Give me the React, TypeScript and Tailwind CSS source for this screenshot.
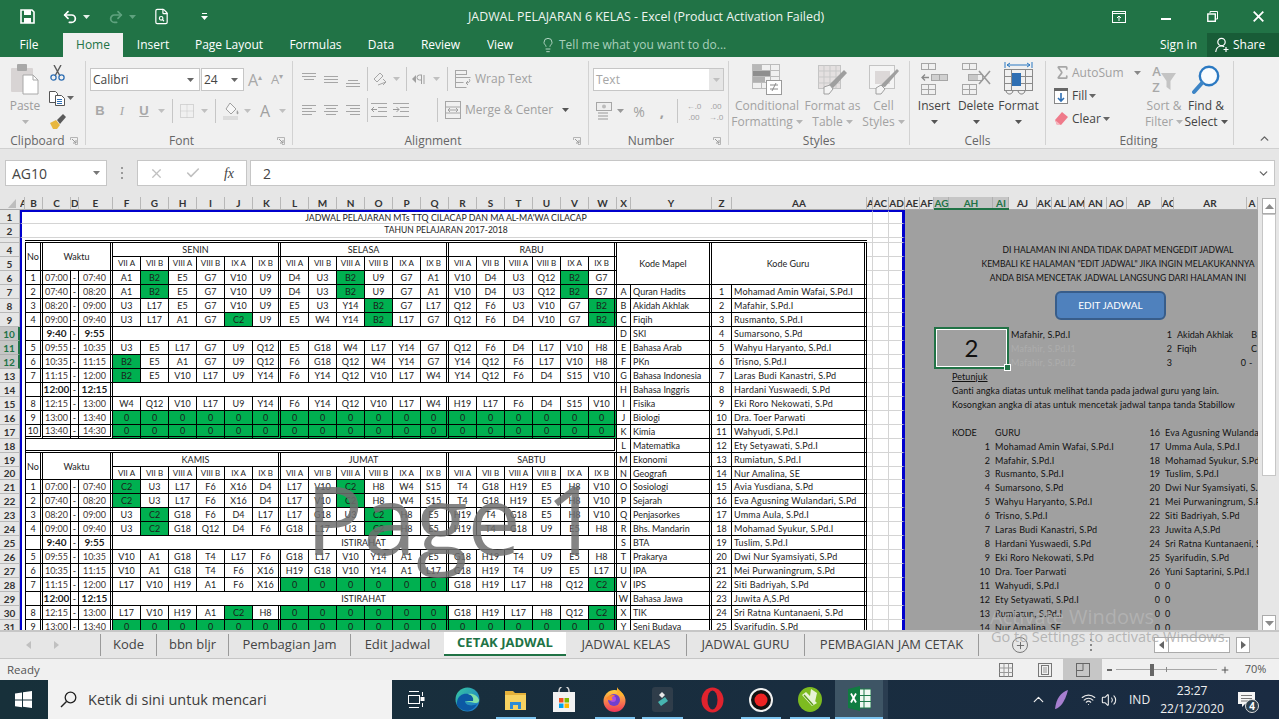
import React from "react";
import { Undo2, Redo2, FileSearch, Lightbulb, Sigma, ChevronUp, ChevronDown, X, Check, Plus, Volume2, Wifi } from "lucide-react";

/* ---------- sheet data ---------- */
const COLS: [string, number][] = [
  ["", 20], ["A", 5], ["B", 18], ["C", 28], ["D", 8], ["E", 34],
  ["F", 28], ["G", 28], ["H", 28], ["I", 28], ["J", 28], ["K", 28], ["L", 28], ["M", 28], ["N", 28], ["O", 28], ["P", 28], ["Q", 28],
  ["R", 28], ["S", 28], ["T", 28], ["U", 28], ["V", 28], ["W", 28],
  ["X", 14], ["Y", 81], ["Z", 20], ["AA", 135], ["A", 6], ["AC", 16], ["AD", 16], ["AE", 15], ["AF", 14], ["AG", 15], ["AH", 44], ["AI", 16],
  ["AJ", 28], ["AK", 15], ["AL", 17], ["AM", 16], ["AN", 22], ["AO", 20], ["AP", 35], ["AC", 12], ["AR", 73], ["A", 11],
];

const HEIGHTS: Record<number, number> = { 3: 5, 20: 13 };
const h = (r: number) => HEIGHTS[r] ?? 14;

const Z6 = ["0*", "0*", "0*", "0*", "0*", "0*"];
const SCHED: Record<number, string[]> = {
  6: ["A1", "B2*", "E5", "G7", "V10", "U9", "D4", "U3", "B2*", "U9", "G7", "A1", "V10", "D4", "U3", "Q12", "B2*", "G7"],
  7: ["A1", "B2*", "E5", "G7", "V10", "U9", "D4", "U3", "B2*", "U9", "G7", "A1", "V10", "D4", "U3", "Q12", "B2*", "G7"],
  8: ["U3", "L17", "E5", "G7", "V10", "U9", "E5", "U3", "Y14", "B2*", "G7", "L17", "Q12", "F6", "U3", "V10", "G7", "B2*"],
  9: ["U3", "L17", "A1", "G7", "C2*", "U9", "E5", "W4", "Y14", "B2*", "L17", "G7", "Q12", "F6", "D4", "V10", "G7", "B2*"],
  11: ["U3", "E5", "L17", "G7", "U9", "Q12", "E5", "G18", "W4", "L17", "Y14", "G7", "Q12", "F6", "D4", "L17", "V10", "H8"],
  12: ["B2*", "E5", "A1", "G7", "U9", "Q12", "F6", "G18", "Q12", "W4", "Y14", "G7", "Y14", "Q12", "F6", "L17", "V10", "H8"],
  13: ["B2*", "E5", "V10", "L17", "U9", "Y14", "F6", "Y14", "Q12", "V10", "L17", "W4", "Y14", "Q12", "F6", "D4", "S15", "V10"],
  15: ["W4", "Q12", "V10", "L17", "U9", "Y14", "F6", "Y14", "Q12", "V10", "L17", "W4", "H19", "L17", "F6", "D4", "S15", "V10"],
  16: [...Z6, ...Z6, ...Z6],
  17: [...Z6, ...Z6, ...Z6],
  21: ["C2*", "U3", "L17", "F6", "X16", "D4", "L17", "V10", "C2*", "H8", "W4", "S15", "T4", "G18", "H19", "E5", "H8", "V10"],
  22: ["C2*", "U3", "L17", "F6", "X16", "D4", "L17", "V10", "C2*", "H8", "W4", "S15", "T4", "G18", "H19", "E5", "H8", "V10"],
  23: ["U3", "C2*", "G18", "F6", "D4", "L17", "L17", "G18", "U3", "C2*", "H8", "E5", "H19", "T4", "G18", "E5", "H8", "V10"],
  24: ["U3", "C2*", "G18", "Q12", "D4", "F6", "G18", "L17", "U3", "C2*", "H8", "E5", "H19", "T4", "G18", "U9", "E5", "H8"],
  26: ["V10", "A1", "G18", "T4", "L17", "F6", "G18", "L17", "V10", "Y14", "A1", "E5", "G18", "H19", "T4", "U9", "E5", "H8"],
  27: ["V10", "A1", "G18", "T4", "F6", "X16", "H19", "G18", "V10", "Y14", "A1", "L17", "G18", "H19", "T4", "U9", "E5", "L17"],
  28: ["L17", "V10", "H19", "A1", "F6", "X16", ...Z6, "G18", "H19", "L17", "H8", "Q12", "C2*"],
  30: ["L17", "V10", "H19", "A1", "C2*", "H8", ...Z6, "G18", "H19", "L17", "H8", "Q12", "C2*"],
  31: [...Z6, ...Z6, ...Z6],
};
const TIMES: [string, string, string][] = [
  ["1", "07:00", "07:40"], ["2", "07:40", "08:20"], ["3", "08:20", "09:00"], ["4", "09:00", "09:40"], ["", "9:40", "9:55"],
  ["5", "09:55", "10:35"], ["6", "10:35", "11:15"], ["7", "11:15", "12:00"], ["", "12:00", "12:15"],
  ["8", "12:15", "13:00"], ["9", "13:00", "13:40"], ["10", "13:40", "14:30"],
];
const MAPEL = ["Quran Hadits", "Akidah Akhlak", "Fiqih", "SKI", "Bahasa Arab", "PKn", "Bahasa Indonesia", "Bahasa Inggris", "Fisika", "Biologi", "Kimia", "Matematika", "Ekonomi", "Geografi", "Sosiologi", "Sejarah", "Penjasorkes", "Bhs.  Mandarin", "BTA", "Prakarya", "IPA", "IPS", "Bahasa Jawa", "TIK", "Seni Budaya"];
const GURU = ["Mohamad Amin Wafai, S.Pd.I", "Mafahir, S.Pd.I", "Rusmanto, S.Pd.I", "Sumarsono, S.Pd", "Wahyu Haryanto, S.Pd.I", "Trisno, S.Pd.I", "Laras Budi Kanastri, S.Pd", "Hardani Yuswaedi, S.Pd", "Eki Roro Nekowati, S.Pd", "Dra. Toer Parwati", "Wahyudi, S.Pd.I", "Ety Setyawati, S.Pd.I", "Rumiatun, S.Pd.I", "Nur Amalina, SE", "Avia Yusdiana, S.Pd", "Eva Agusning Wulandari, S.Pd", "Umma Aula, S.Pd.I", "Mohamad Syukur, S.Pd.I", "Tuslim, S.Pd.I", "Dwi Nur Syamsiyati, S.Pd", "Mei Purwaningrum, S.Pd", "Siti Badriyah, S.Pd", "Juwita A,S.Pd", "Sri Ratna Kuntanaeni, S.Pd", "Syarifudin, S.Pd", "Yuni Saptarini, S.Pd.I"];
const KELAS = ["VII A", "VII B", "VIII A", "VIII B", "IX A", "IX B"];

/* ---------- cell classes ---------- */
const TD = "p-0 overflow-hidden whitespace-nowrap text-[#1c1c1c] leading-[11px] align-middle";
const C = "text-center";
const S1 = "border-r border-b border-double border-black";
const S2 = "border-r-[3px] border-b border-double border-black";
const GRAY = "p-0 bg-[#a0a0a0] overflow-hidden whitespace-nowrap text-[#111] leading-[11px] align-middle";

function rowHeader(r: number) {
  const sel = r >= 10 && r <= 12;
  return (
    <th
      key="rh"
      className={
        sel
          ? "p-0 bg-[#c6c6c6] text-[#217346] text-[10px] font-bold border-r-2 border-b border-r-[#217346] border-b-[#b0b0b0] leading-[10px]"
          : "p-0 bg-[#e6e6e6] text-[#333] text-[10px] font-bold border-r border-b border-[#b8b8b8] leading-[10px]"
      }
    >
      {r === 3 ? "" : r}
    </th>
  );
}

function leftA() {
  return <td key="a" className="p-0 bg-white border-l-2 border-l-[#0000cd]" />;
}

function rightGrid(top = false) {
  const c = top
    ? "p-0 bg-white border-t-2 border-t-[#0000cd] border-r border-b border-r-[#d4d4d4] border-b-[#d4d4d4]"
    : "p-0 bg-white border-r border-b border-[#d4d4d4]";
  const d = top
    ? "p-0 bg-white border-t-2 border-t-[#0000cd] border-r-[3px] border-b border-r-[#0000cd] border-b-[#d4d4d4]"
    : "p-0 bg-white border-r-[3px] border-b border-r-[#0000cd] border-b-[#d4d4d4]";
  return [<td key="ab" className={c} />, <td key="ac" className={c} />, <td key="ad" className={d} />];
}

function scheduleCell(v: string, i: number) {
  const green = v.endsWith("*");
  const border = i % 6 === 5 ? S2 : S1;
  return (
    <td key={i} className={`${TD} ${C} ${border} ${green ? "bg-[#00b050]" : "bg-white"}`}>
      {green ? v.slice(0, -1) : v}
    </td>
  );
}

function leftBlock(r: number) {
  const base = r >= 21 ? r - 21 : r - 6;
  const [no, a, b] = TIMES[base];
  const brk = no === "";
  const dbl = r === 17 ? "border-b-[3px]" : "";
  const timeCls = brk ? "text-[#000] text-[10px] font-bold" : "text-[#3f3530]";
  return [
    <td key="b" className={`${TD} ${C} border-l ${S2} ${dbl} bg-white`}>{no}</td>,
    <td key="c" className={`${TD} ${C} ${S1} ${dbl} bg-white ${timeCls}`}>{a}</td>,
    <td key="d" className={`${TD} ${C} ${S1} ${dbl} bg-white`}>-</td>,
    <td key="e" className={`${TD} ${C} ${S2} ${dbl} bg-white ${timeCls}`}>{b}</td>,
  ];
}

function dayHeaderRow(names: string[]) {
  return names.map((n) => (
    <td key={n} colSpan={6} className={`${TD} ${C} ${S2} bg-white`}>{n}</td>
  ));
}

function rightBlocks(r: number) {
  if (r === 4) {
    return [
      <td key="m" colSpan={2} rowSpan={3} className={`${TD} ${C} ${S2} bg-white`}>Kode Mapel</td>,
      <td key="g" colSpan={2} rowSpan={3} className={`${TD} ${C} ${S2} bg-white`}>Kode Guru</td>,
    ];
  }
  if (r < 7) return [];
  const i = r - 7;
  return [
    <td key="x" className={`${TD} ${C} ${S1} bg-white`}>{String.fromCharCode(65 + i)}</td>,
    <td key="y" className={`${TD} ${S2} bg-white pl-[2px]`}>{MAPEL[i]}</td>,
    <td key="z" className={`${TD} ${C} ${S1} bg-white`}>{i + 1}</td>,
    <td key="aa" className={`${TD} ${S2} bg-white pl-[2px] tracking-[0.2px]`}>{GURU[i]}</td>,
  ];
}

function grayEmpty(n: number, k = "g") {
  return <td key={k} colSpan={n} className={GRAY} />;
}

function grayBlock(r: number) {
  if (r >= 4 && r <= 6) {
    const t = [
      "DI HALAMAN INI ANDA TIDAK DAPAT MENGEDIT JADWAL",
      'KEMBALI KE HALAMAN "EDIT JADWAL" JIKA INGIN MELAKUKANNYA',
      "ANDA BISA MENCETAK JADWAL LANGSUNG DARI HALAMAN INI",
    ][r - 4];
    return [grayEmpty(3, "g1"), <td key="t" colSpan={12} className={`${GRAY} text-center pl-[29px] text-[8.5px]`}>{t}</td>];
  }
  if (r >= 10 && r <= 12) {
    const cells = [grayEmpty(2, "g1")];
    if (r === 10) {
      cells.push(
        <td key="sel" colSpan={3} rowSpan={3} className="p-0 relative bg-[#a0a0a0] border-2 border-[#217346] shadow-[inset_0_0_0_1px_#fff] text-center text-[24px] leading-none text-[#111]">
          2
          <span className="absolute -right-[4px] -bottom-[4px] w-[7px] h-[7px] bg-[#217346] border border-white" />
        </td>
      );
    }
    const names = ["Mafahir, S.Pd.I", "Mafahir, S.Pd.I1", "Mafahir, S.Pd.I2"];
    cells.push(
      <td key="n" colSpan={7} className={`${GRAY} pl-[2px] tracking-[0.2px] ${r === 10 ? "" : "text-[#adadad]"}`}>{names[r - 10]}</td>,
      <td key="q" className={`${GRAY} text-right pr-[2px]`}>{r - 9}</td>,
      r === 12
        ? <td key="r" className={`${GRAY} text-right pr-[1px]`}>0</td>
        : <td key="r" className={`${GRAY} pl-[3px]`}>{r === 10 ? "Akidah Akhlak" : "Fiqih"}</td>,
      <td key="s" className={`${GRAY} ${r === 12 ? "pl-[2px]" : "text-right pr-[1px]"}`}>{r === 10 ? "B" : r === 11 ? "C" : "-"}</td>
    );
    return cells;
  }
  if (r >= 13 && r <= 15) {
    const t = r === 13
      ? <span className="underline">Petunjuk</span>
      : r === 14
        ? "Ganti angka diatas untuk melihat tanda pada jadwal guru yang lain."
        : "Kosongkan angka di atas untuk mencetak jadwal tanpa tanda Stabillow";
    return [grayEmpty(3, "g1"), <td key="t" colSpan={12} className={`${GRAY} pl-[3px] tracking-[0.08px]`}>{t}</td>];
  }
  if (r === 17) {
    return [
      grayEmpty(3, "g1"),
      <td key="k" className={`${GRAY} pl-[3px]`}>KODE</td>,
      <td key="u" colSpan={7} className={`${GRAY} pl-[2px]`}>GURU</td>,
      <td key="p" className={`${GRAY} text-right pr-[2px]`}>16</td>,
      <td key="q" colSpan={3} className={`${GRAY} pl-[3px] tracking-[0.2px]`}>{GURU[15]}</td>,
    ];
  }
  if (r >= 18) {
    const i = r - 18;
    const j = 16 + i;
    return [
      grayEmpty(3, "g1"),
      <td key="k" className={`${GRAY} text-right pr-[3px]`}>{i + 1}</td>,
      <td key="u" colSpan={7} className={`${GRAY} pl-[2px] tracking-[0.2px]`}>{GURU[i]}</td>,
      <td key="p" className={`${GRAY} text-right pr-[2px]`}>{j < 26 ? j + 1 : 0}</td>,
      <td key="q" colSpan={3} className={`${GRAY} pl-[3px] tracking-[0.2px]`}>{j < 26 ? GURU[j] : 0}</td>,
    ];
  }
  return [grayEmpty(15)];
}

function buildRows() {
  const rows: React.ReactNode[] = [];
  for (let r = 1; r <= 31; r++) {
    let mid: React.ReactNode[] = [];
    if (r === 1 || r === 2) {
      mid = [
        <td key="a" className={`p-0 bg-white border-l-2 border-l-[#0000cd] border-b border-b-[#d4d4d4] ${r === 1 ? "border-t-2 border-t-[#0000cd]" : ""}`} />,
        <td key="t" colSpan={26} className={`${TD} ${C} bg-white border-b border-b-[#d4d4d4] ${r === 1 ? "border-t-2 border-t-[#0000cd] text-[8.8px]" : "text-[8.5px]"}`}>
          {r === 1 ? "JADWAL  PELAJARAN MTs TTQ CILACAP DAN MA AL-MA'WA CILACAP" : "TAHUN PELAJARAN 2017-2018"}
        </td>,
        ...rightGrid(r === 1),
      ];
    } else if (r === 3) {
      mid = [
        leftA(),
        <td key="t" colSpan={26} className="p-0 bg-white border-b-[3px] border-double border-black" />,
        ...rightGrid(),
      ];
    } else if (r === 4 || r === 19) {
      mid = [
        leftA(),
        <td key="no" rowSpan={2} className={`${TD} ${C} border-l ${S2} bg-white`}>No</td>,
        <td key="w" rowSpan={2} colSpan={3} className={`${TD} ${C} ${S2} bg-white`}>Waktu</td>,
        ...dayHeaderRow(r === 4 ? ["SENIN", "SELASA", "RABU"] : ["KAMIS", "JUMAT", "SABTU"]),
        ...rightBlocks(r),
        ...rightGrid(),
      ];
    } else if (r === 5 || r === 20) {
      const k = [...KELAS, ...KELAS, ...KELAS];
      mid = [
        leftA(),
        ...k.map((n, i) => (
          <td key={i} className={`${TD} ${C} ${i % 6 === 5 ? S2 : S1} bg-white text-[8px]`}>{n}</td>
        )),
        ...rightBlocks(r),
        ...rightGrid(),
      ];
    } else if (r === 18) {
      mid = [
        leftA(),
        <td key="t" colSpan={22} className={`${TD} border-l ${S2} border-b-[3px] bg-white`} />,
        ...rightBlocks(r),
        ...rightGrid(),
      ];
    } else {
      const isBreak = !SCHED[r];
      const left = leftBlock(r);
      const body = isBreak
        ? [<td key="brk" colSpan={18} className={`${TD} ${C} ${S2} bg-white`}>{r >= 21 ? "ISTIRAHAT" : ""}</td>]
        : SCHED[r].map((v, i) => {
            if (r === 17) {
              return (
                <td key={i} className={`${TD} ${C} ${i % 6 === 5 ? S2 : S1} border-b-[3px] bg-[#00b050]`}>0</td>
              );
            }
            return scheduleCell(v, i);
          });
      mid = [leftA(), ...left, ...body, ...rightBlocks(r), ...rightGrid()];
    }
    rows.push(
      <tr key={r} style={{ height: h(r) }}>
        {rowHeader(r)}
        {mid}
        {grayBlock(r)}
      </tr>
    );
  }
  return rows;
}

/* ---------- small drawings ---------- */
function Caret({ c = "#a8a8a8" }: { c?: string }) {
  return (
    <svg width="7" height="4" viewBox="0 0 7 4" className="shrink-0"><path d="M0 0h7L3.5 4z" fill={c} /></svg>
  );
}
function Lines({ ys, xs, w = 16, h: hh = 16 }: { ys: number[]; xs: [number, number][]; w?: number; h?: number }) {
  return (
    <svg width={w} height={hh} viewBox={`0 0 ${w} ${hh}`}>
      {ys.map((y, i) => (
        <path key={i} d={`M${xs[i][0]} ${y}.5H${xs[i][1]}`} stroke="#a6a6a6" strokeWidth="1" />
      ))}
    </svg>
  );
}
function Launcher() {
  return (
    <svg width="8" height="8" viewBox="0 0 8 8"><path d="M.5 3V.5H7.5V7.5H5" fill="none" stroke="#b5b5b5" /><path d="M2 2l4 4M6 3v3H3" fill="none" stroke="#9a9a9a" /></svg>
  );
}
function Dots({ c = "bg-[#9a9a9a]" }: { c?: string }) {
  return (
    <div className="flex flex-col gap-[3px]">
      <div className={`w-[2px] h-[2px] ${c}`} />
      <div className={`w-[2px] h-[2px] ${c}`} />
      <div className={`w-[2px] h-[2px] ${c}`} />
    </div>
  );
}
function Sep({ cls = "h-[24px]" }: { cls?: string }) {
  return <div className={`w-px bg-[#c6c6c6] shrink-0 ${cls}`} />;
}
function Slot({ w, children }: { w: string; children?: React.ReactNode }) {
  return <div className={`${w} shrink-0 flex items-center justify-center`}>{children}</div>;
}
function GroupSep() {
  return <div className="w-px h-[84px] mt-1 bg-[#d2d2d2] shrink-0" />;
}
function Group({ w, label, labelCls = "", launcher, children }: { w: string; label: string; labelCls?: string; launcher?: boolean; children: React.ReactNode }) {
  return (
    <div className={`${w} shrink-0 h-[92px] flex flex-col pt-1`}>
      <div className="h-[72px] flex-none">{children}</div>
      <div className={`h-[16px] flex items-center text-[12px] leading-4 text-[#666] ${labelCls}`}>
        <span className="flex-1 text-center">{label}</span>
        {launcher && <span className="w-[15px] flex shrink-0 justify-start"><Launcher /></span>}
      </div>
    </div>
  );
}
function BigBtn({ w, lines, icon, dim = true }: { w: string; lines: string[]; icon: React.ReactNode; dim?: boolean }) {
  return (
    <div className={`${w} shrink-0 flex flex-col items-center text-[12px] leading-4 ${dim ? "text-[#a2a2a2]" : "text-[#444]"}`}>
      <div className="h-[30px] mt-1 mb-[3px] flex items-end justify-center">{icon}</div>
      <div className="whitespace-nowrap">{lines[0]}</div>
      <div className="h-4 flex items-center gap-[3px] whitespace-nowrap">
        {lines[1]}
        <Caret c={dim ? "#b5b5b5" : "#555"} />
      </div>
    </div>
  );
}

function ClipboardIcon() {
  return (
    <svg width="28" height="31" viewBox="0 0 28 31">
      <rect x="0" y="4" width="22" height="24" rx="1" fill="#d8d4d4" />
      <rect x="6" y="0" width="10" height="7" rx="1" fill="#a8a8a8" />
      <path d="M12 11h10l5 5v14H12z" fill="#fff" stroke="#a8a8a8" />
      <path d="M22 11v5h5" fill="none" stroke="#a8a8a8" />
    </svg>
  );
}
function ScissorsIcon() {
  return (
    <svg width="15" height="16" viewBox="0 0 15 16">
      <path d="M4 0l6 11M11 0L5 11" stroke="#5a5a5a" strokeWidth="1.4" />
      <circle cx="3.5" cy="12.5" r="2.6" fill="none" stroke="#2f6fb3" strokeWidth="1.3" />
      <circle cx="11.5" cy="12.5" r="2.6" fill="none" stroke="#2f6fb3" strokeWidth="1.3" />
    </svg>
  );
}
function CopyIcon() {
  return (
    <svg width="16" height="15" viewBox="0 0 16 15">
      <path d="M.5.5h6l2 2v9H.5z" fill="#fff" stroke="#555" />
      <path d="M6.5 4.5h6l3 3v7h-9z" fill="#fff" stroke="#555" />
      <path d="M8 8.5h5M8 10.5h5M8 12.5h5" stroke="#2f6fb3" />
    </svg>
  );
}
function PainterIcon() {
  return (
    <svg width="17" height="15" viewBox="0 0 17 15">
      <path d="M1 9l6-3 4 5-3 4H4z" fill="#e8b73f" />
      <path d="M8 6l6-6 3 3-6 7z" fill="#5a5a5a" />
    </svg>
  );
}
function CondIcon() {
  return (
    <svg width="30" height="31" viewBox="0 0 30 31">
      <g fill="none" stroke="#bbb">
        <rect x=".5" y=".5" width="27" height="24" />
        <path d="M9.5 .5v24M18.5 .5v24M.5 6.5h27M.5 12.5h27M.5 18.5h27" />
      </g>
      <rect x="1" y="1" width="8" height="5" fill="#b8b8b8" />
      <rect x="1" y="7" width="17" height="5" fill="#8e8e8e" />
      <rect x="1" y="13" width="12" height="5" fill="#b0b0b0" />
      <rect x="14.5" y="16.5" width="15" height="14" fill="#fff" stroke="#9a9a9a" />
      <path d="M18 21h8M18 25h8M24 19l-4 8" stroke="#8a8a8a" fill="none" />
    </svg>
  );
}
function TableIcon() {
  return (
    <svg width="29" height="30" viewBox="0 0 29 30">
      <rect x=".5" y=".5" width="22" height="23" fill="#e4e0e0" stroke="#c4c4c4" />
      <path d="M6 .5v23M12 .5v23M18 .5v23M.5 6h22M.5 12h22M.5 18h22" stroke="#c9c9c9" />
      <path d="M26 5l3 3-14 15-5-2z" fill="#9f9f9f" />
      <path d="M6 22l6-2 3 4-4 5H6z" fill="#f4f4f4" stroke="#9f9f9f" />
    </svg>
  );
}
function CellStyleIcon() {
  return (
    <svg width="30" height="30" viewBox="0 0 30 30">
      <rect x=".5" y=".5" width="25" height="23" fill="#f4f4f4" stroke="#c4c4c4" />
      <rect x="6" y="6" width="15" height="13" fill="#dcd8d8" />
      <path d="M28 4l2 2-14 16-5-1z" fill="#9f9f9f" />
      <path d="M7 23l5-3 4 4-4 5H7z" fill="#f4f4f4" stroke="#9f9f9f" />
    </svg>
  );
}
function InsertIcon() {
  return (
    <svg width="27" height="32" viewBox="0 0 27 32">
      <g fill="none" stroke="#a6a6a6">
        <rect x=".5" y=".5" width="14" height="6" /><path d="M7.5 .5v6" />
        <rect x=".5" y="21.5" width="14" height="10" /><path d="M7.5 21.5v10M.5 26.5h14" />
        <rect x="10.5" y="11.5" width="16" height="6" /><path d="M18.5 11.5v6" />
      </g>
      <rect x="11" y="12" width="7" height="5" fill="#d0d0d0" />
      <rect x="19" y="12" width="7" height="5" fill="#d0d0d0" />
      <path d="M8 14.5H1M4 11.5l-3 3 3 3" fill="none" stroke="#8a8a8a" strokeWidth="1.3" />
    </svg>
  );
}
function DeleteIcon() {
  return (
    <svg width="29" height="32" viewBox="0 0 29 32">
      <g fill="none" stroke="#a6a6a6">
        <rect x=".5" y=".5" width="14" height="6" /><path d="M7.5 .5v6" />
        <rect x=".5" y="21.5" width="14" height="10" /><path d="M7.5 21.5v10M.5 26.5h14" />
        <rect x="6.5" y="11.5" width="14" height="6" />
      </g>
      <rect x="7" y="12" width="9" height="5" fill="#c8c8c8" />
      <path d="M17 8l11 13M28 8L17 21" stroke="#9a9a9a" strokeWidth="1.6" />
    </svg>
  );
}
function FormatIcon() {
  return (
    <svg width="29" height="33" viewBox="0 0 29 33">
      <path d="M1 0v6M28 0v6M3 3h23M3 3l3-2M3 3l3 2M26 3l-3-2M26 3l-3 2" fill="none" stroke="#2b79c2" />
      <g fill="none" stroke="#8a8a8a">
        <rect x=".5" y="7.5" width="28" height="21" />
        <path d="M7.5 7.5v21M21.5 7.5v21M.5 14.5h28M.5 21.5h28" />
      </g>
      <rect x="8" y="11" width="9" height="13" fill="#2f6fb3" />
      <path d="M2 29c1 4 6 4 7 0M14 29c1 4 6 4 7 0" fill="none" stroke="#777" />
    </svg>
  );
}

function TaskIcon({ w, under, children }: { w: string; under?: string; children: React.ReactNode }) {
  return (
    <div className={`${w} relative flex items-center justify-center shrink-0`}>
      {children}
      {under && <div className={`${under} absolute bottom-0 h-[2px] bg-[#7cc4f0]`} />}
    </div>
  );
}

/* ---------- App ---------- */
export default function App() {
  return (
    <div className="relative w-[1279px] h-[719px] overflow-hidden flex flex-col bg-[#f0f0f0] [font-family:'Open_Sans',sans-serif]">
      {/* title bar */}
      <div className="h-[33px] bg-[#217346] flex items-center text-white shrink-0">
        <div className="w-[20px]" />
        <svg width="15" height="15" viewBox="0 0 15 15"><path d="M1 1h11l2 2v11H1z" fill="none" stroke="#fff" strokeWidth="1.6" /><rect x="4" y="1" width="7" height="5" fill="#fff" /><rect x="4" y="9" width="7" height="5" fill="#fff" /></svg>
        <div className="w-[27px]" />
        <Undo2 size={16} strokeWidth={2.6} color="#fff" />
        <Slot w="w-[12px] ml-[2px]"><Caret c="#e6f0ea" /></Slot>
        <div className="w-[16px]" />
        <Redo2 size={16} strokeWidth={2.6} color="#5fa27f" />
        <Slot w="w-[12px] ml-[2px]"><Caret c="#5fa27f" /></Slot>
        <div className="w-[15px]" />
        <FileSearch size={17} strokeWidth={1.7} color="#fff" />
        <div className="w-[31px]" />
        <div className="flex flex-col items-center gap-[2px]"><div className="w-[5px] h-[1px] bg-white" /><Caret c="#fff" /></div>
        <div className="w-[260px] shrink-0" />
        <div className="w-[340px] text-[12.4px] whitespace-nowrap text-[#eef5f0] text-center mt-px">JADWAL PELAJARAN 6 KELAS - Excel (Product Activation Failed)</div>
        <div className="flex-1" />
        <svg width="14" height="12" viewBox="0 0 14 12" className="mr-[35px]"><rect x=".5" y=".5" width="13" height="11" fill="none" stroke="#fff" /><path d="M1 2.5h12" stroke="#fff" /><path d="M7 10V5M5 7l2-2 2 2" fill="none" stroke="#fff" /></svg>
        <div className="w-[10px] h-[2px] bg-white mr-[36px] mt-1" />
        <svg width="11" height="11" viewBox="0 0 11 11" className="mr-[35px]"><path d="M3 2V.5h7.5V8H8.5" fill="none" stroke="#fff" /><rect x=".8" y="3" width="7.5" height="7.3" fill="none" stroke="#fff" strokeWidth="1.4" /></svg>
        <svg width="11" height="11" viewBox="0 0 11 11" className="mr-[15px]"><path d="M.7.7l9.6 9.6M10.3.7L.7 10.3" stroke="#fff" strokeWidth="1.8" /></svg>
      </div>

      {/* tabs */}
      <div className="h-[24px] bg-[#217346] flex items-stretch text-white text-[12px] shrink-0">
        <div className="w-[58px] mr-[5px] flex items-center justify-center">File</div>
        <div className="w-[60px] bg-[#f0f0f0] text-[#217346] flex items-center justify-center">Home</div>
        <div className="w-[60px] flex items-center justify-center">Insert</div>
        <div className="w-[92px] flex items-center justify-center">Page Layout</div>
        <div className="w-[81px] flex items-center justify-center">Formulas</div>
        <div className="w-[50px] flex items-center justify-center">Data</div>
        <div className="w-[69px] flex items-center justify-center">Review</div>
        <div className="w-[50px] flex items-center justify-center">View</div>
        <div className="w-[15px]" />
        <div className="flex items-center gap-[3px] text-[#a9d0bb]">
          <Lightbulb size={16} strokeWidth={1.4} color="#bcdccb" />
          <span>Tell me what you want to do...</span>
        </div>
        <div className="flex-1" />
        <div className="flex items-center mr-[10px]">Sign in</div>
        <div className="w-[72px] bg-[#185c37] flex items-center pl-[8px] gap-[3px]">
          <svg width="15" height="16" viewBox="0 0 15 16"><circle cx="6.5" cy="5" r="3.7" fill="none" stroke="#fff" strokeWidth="1.2" /><path d="M.7 15c.5-4 2.7-6 5.8-6 1 0 2 .3 2.7.8" fill="none" stroke="#fff" strokeWidth="1.2" /><path d="M11 10v5M8.5 12.5h5" stroke="#fff" strokeWidth="1.2" /></svg>
          <span>Share</span>
        </div>
      </div>

      {/* ribbon */}
      <div className="h-[92px] bg-[#f0f0f0] flex border-b border-[#d0d0d0] shrink-0">
        <Group w="w-[85px]" label="Clipboard" labelCls="pl-[5px]" launcher>
          <div className="flex">
            <div className="w-[40px] ml-[5px] flex flex-col items-center text-[12px] leading-4 text-[#9c9c9c]">
              <div className="h-[34px] flex items-end"><ClipboardIcon /></div>
              <div className="mt-[3px]">Paste</div>
              <div className="h-4 flex items-center"><Caret c="#b5b5b5" /></div>
            </div>
            <div className="flex flex-col w-[30px] ml-[1px]">
              <div className="h-[24px] flex items-center pl-[4px]"><ScissorsIcon /></div>
              <div className="h-[24px] flex items-center pl-[3px] gap-[2px] mt-px"><CopyIcon /><Caret c="#666" /></div>
              <div className="h-[22px] flex items-center pl-[3px]"><PainterIcon /></div>
            </div>
          </div>
        </Group>
        <GroupSep />
        <Group w="w-[206px]" label="Font" launcher>
          <div className="h-[37px] flex items-center pl-[4px]">
            <div className="w-[110px] h-[23px] bg-white border border-[#c6c6c6] flex items-center justify-between pl-[2px] pr-[5px] text-[12px] text-[#444]">Calibri<Caret c="#666" /></div>
            <div className="w-[43px] ml-px h-[23px] bg-white border border-[#c6c6c6] flex items-center justify-between pl-[2px] pr-[5px] text-[12px] text-[#444]">24<Caret c="#666" /></div>
            <Slot w="w-[22px]"><span className="text-[16px] text-[#a8a8a8] leading-none">A<span className="text-[8px] align-super">▴</span></span></Slot>
            <Slot w="w-[22px]"><span className="text-[13px] text-[#a8a8a8] leading-none">A<span className="text-[8px] align-super">▾</span></span></Slot>
          </div>
          <div className="h-[26px] flex items-center pl-[3px] text-[#a8a8a8]">
            <Slot w="w-[22px]"><span className="text-[13px] font-bold [font-family:'Liberation_Sans',sans-serif]">B</span></Slot>
            <Slot w="w-[22px]"><span className="text-[13px] italic [font-family:'Liberation_Serif',serif]">I</span></Slot>
            <Slot w="w-[22px]"><span className="text-[13px] underline font-bold [font-family:'Liberation_Sans',sans-serif]">U</span></Slot>
            <Slot w="w-[12px]"><Caret c="#c0c0c0" /></Slot>
            <div className="w-[5px]" /><Sep />
            <Slot w="w-[28px]">
              <svg width="14" height="14" viewBox="0 0 14 14"><rect x=".5" y=".5" width="13" height="13" fill="none" stroke="#b8b8b8" strokeDasharray="1 1" /><path d="M7 .5v13M.5 7h13" stroke="#c8c8c8" strokeDasharray="1 1" /></svg>
            </Slot>
            <Slot w="w-[7px]"><Caret c="#c0c0c0" /></Slot>
            <div className="w-[7px]" /><Sep />
            <div className="w-[3px]" />
            <Slot w="w-[24px]">
              <svg width="17" height="18" viewBox="0 0 17 18"><path d="M7 1l6 6-5 5-5-5z" fill="#f7f7f7" stroke="#a0a0a0" /><path d="M14 8c1.5 2 2 3 1 4s-2 0-1-4z" fill="#a0a0a0" /><rect x="0" y="14" width="15" height="4" fill="#dcdcdc" /></svg>
            </Slot>
            <Slot w="w-[8px]"><Caret c="#c0c0c0" /></Slot>
            <div className="w-[3px]" />
            <Slot w="w-[22px]"><span className="text-[16px] leading-none text-[#a0a0a0]">A</span></Slot>
            <Slot w="w-[12px]"><Caret c="#c0c0c0" /></Slot>
          </div>
        </Group>
        <GroupSep />
        <Group w="w-[295px]" label="Alignment" launcher>
          <div className="h-[36px] flex items-center pl-[5px]">
            <Slot w="w-[22px]"><Lines ys={[2, 5, 8]} xs={[[1, 15], [1, 15], [3, 13]]} /></Slot>
            <Slot w="w-[22px]"><Lines ys={[5, 8, 11]} xs={[[1, 15], [1, 15], [1, 15]]} /></Slot>
            <Slot w="w-[22px]"><Lines ys={[9, 12, 15]} xs={[[3, 13], [1, 15], [1, 15]]} /></Slot>
            <div className="w-[3px]" /><Sep />
            <Slot w="w-[24px]">
              <svg width="16" height="16" viewBox="0 0 16 16"><path d="M2 8l6-6 3 3-6 6z" fill="none" stroke="#a6a6a6" /><path d="M6 14l8-3M11 8l3 3-3 3" fill="none" stroke="#a6a6a6" /></svg>
            </Slot>
            <Slot w="w-[8px]"><Caret c="#c0c0c0" /></Slot>
            <div className="w-[6px]" /><Sep />
            <Slot w="w-[24px]">
              <svg width="14" height="11" viewBox="0 0 14 11"><path d="M0 5l4-4v8z" fill="#a0a0a0" /><path d="M10 1H7.5a2.2 2.2 0 000 5H10M9.5 1v9M12 1v9" fill="none" stroke="#a0a0a0" /></svg>
            </Slot>
            <Slot w="w-[10px]"><Caret c="#c0c0c0" /></Slot>
            <div className="w-[6px]" /><Sep />
            <div className="w-[7px]" />
            <svg width="16" height="18" viewBox="0 0 16 18"><rect x=".5" y=".5" width="11" height="4" fill="none" stroke="#a6a6a6" /><path d="M.5 7.5h15M.5 12.5h8M.5 17.5h11M.5 4v14" stroke="#a6a6a6" fill="none" /><path d="M14 9c2 2 0 4-3 4M11 13l2-2M11 13l2 2" fill="none" stroke="#a0a0a0" /></svg>
            <span className="ml-[4px] text-[12px] text-[#a0a0a0] whitespace-nowrap">Wrap Text</span>
          </div>
          <div className="h-[26px] flex items-center pl-[5px]">
            <Slot w="w-[22px]"><Lines ys={[3, 6, 9, 12]} xs={[[1, 15], [1, 11], [1, 15], [1, 11]]} /></Slot>
            <Slot w="w-[22px]"><Lines ys={[3, 6, 9, 12]} xs={[[1, 15], [3, 13], [1, 15], [3, 13]]} /></Slot>
            <Slot w="w-[22px]"><Lines ys={[3, 6, 9, 12]} xs={[[1, 15], [5, 15], [1, 15], [5, 15]]} /></Slot>
            <div className="w-[3px]" /><Sep />
            <Slot w="w-[22px]">
              <svg width="16" height="14" viewBox="0 0 16 14"><path d="M0 .5h16M7 4.5h9M7 8.5h9M0 13.5h16" stroke="#a6a6a6" /><path d="M6 6.5H0M3 4L.5 6.5 3 9" fill="none" stroke="#9a9a9a" /></svg>
            </Slot>
            <Slot w="w-[22px]">
              <svg width="16" height="14" viewBox="0 0 16 14"><path d="M0 .5h16M7 4.5h9M7 8.5h9M0 13.5h16" stroke="#a6a6a6" /><path d="M0 6.5h6M3.5 4L6 6.5 3.5 9" fill="none" stroke="#9a9a9a" /></svg>
            </Slot>
            <div className="w-[25px]" /><Sep />
            <div className="w-[7px]" />
            <svg width="16" height="18" viewBox="0 0 16 18"><rect x=".5" y=".5" width="15" height="17" fill="none" stroke="#a6a6a6" /><path d="M.5 6h15M.5 12h15" stroke="#a6a6a6" /><path d="M3 9h10M3 9l2-2M3 9l2 2M13 9l-2-2M13 9l-2 2" fill="none" stroke="#a0a0a0" /></svg>
            <span className="ml-[4px] text-[12px] text-[#a0a0a0] whitespace-nowrap">Merge &amp; Center</span>
            <div className="w-[9px]" /><Caret c="#555" />
          </div>
        </Group>
        <GroupSep />
        <Group w="w-[139px]" label="Number" launcher>
          <div className="h-[37px] flex items-center pl-[4px]">
            <div className="w-[131px] h-[23px] bg-white border border-[#c6c6c6] flex items-center pl-[2px] text-[12px] text-[#a6a6a6]">
              <span className="flex-1">Text</span>
              <div className="w-[14px] h-full bg-[#e6e6e6] flex items-center justify-center"><Caret c="#c0c0c0" /></div>
            </div>
          </div>
          <div className="h-[26px] flex items-center pl-[7px] text-[#a0a0a0]">
            <svg width="16" height="18" viewBox="0 0 16 18"><rect x=".5" y=".5" width="15" height="8" fill="#eee" stroke="#a6a6a6" /><circle cx="8" cy="4.5" r="2" fill="#bbb" /><path d="M2 11h10M2 14h10M2 17h10" stroke="#c4c4c4" strokeWidth="2" /></svg>
            <Slot w="w-[16px]"><Caret c="#999" /></Slot>
            <Slot w="w-[22px]"><span className="text-[14px]">%</span></Slot>
            <div className="w-[1px]" />
            <Slot w="w-[22px]"><span className="text-[15px] font-bold leading-none">,</span></Slot>
            <div className="w-[4px]" /><Sep />
            <div className="w-[6px]" />
            <div className="w-[20px] flex flex-col items-center text-[8px] leading-[11px]"><span>←.0</span><span>.00</span></div>
            <div className="w-[2px]" />
            <div className="w-[20px] flex flex-col items-center text-[8px] leading-[11px]"><span>.00</span><span>→.0</span></div>
          </div>
        </Group>
        <GroupSep />
        <Group w="w-[180px]" label="Styles">
          <div className="flex">
            <BigBtn w="w-[76px]" lines={["Conditional", "Formatting"]} icon={<CondIcon />} />
            <BigBtn w="w-[55px]" lines={["Format as", "Table"]} icon={<TableIcon />} />
            <BigBtn w="w-[49px] -ml-[1px]" lines={["Cell", "Styles"]} icon={<CellStyleIcon />} />
          </div>
        </Group>
        <GroupSep />
        <Group w="w-[135px]" label="Cells">
          <div className="flex pl-[3px]">
            <BigBtn w="w-[42px]" dim={false} lines={["Insert", ""]} icon={<InsertIcon />} />
            <BigBtn w="w-[42px]" dim={false} lines={["Delete", ""]} icon={<DeleteIcon />} />
            <BigBtn w="w-[43px]" dim={false} lines={["Format", ""]} icon={<FormatIcon />} />
          </div>
        </Group>
        <GroupSep />
        <Group w="w-[187px]" label="Editing" labelCls="pr-[2px]">
          <div className="flex">
            <div className="w-[96px] flex flex-col text-[12px] pl-[8px]">
              <div className="h-[23px] flex items-center text-[#a0a0a0]">
                <Sigma size={17} strokeWidth={2.4} color="#a6a6a6" />
                <span className="ml-[1px]">AutoSum</span>
                <div className="w-[10px]" /><Caret c="#888" />
              </div>
              <div className="h-[23px] flex items-center text-[#444]">
                <svg width="14" height="16" viewBox="0 0 14 16"><rect x=".5" y=".5" width="13" height="15" fill="#fff" stroke="#888" /><rect x="0" y="0" width="14" height="3" fill="#666" /><path d="M7 5v8M4 10l3 3 3-3" fill="none" stroke="#2f6fb3" strokeWidth="1.6" /></svg>
                <span className="ml-[4px]">Fill</span><div className="w-[2px]" /><Caret c="#666" />
              </div>
              <div className="h-[23px] flex items-center text-[#444]">
                <svg width="14" height="15" viewBox="0 0 14 15"><path d="M1 9l7-8 6 5-7 8H3z" fill="#ef7a8a" /><path d="M1 9l6 5H3z" fill="#f5b8c0" /></svg>
                <span className="ml-[4px]">Clear</span><div className="w-[2px]" /><Caret c="#666" />
              </div>
            </div>
            <BigBtn w="w-[40px] ml-[2px]" lines={["Sort &", "Filter"]} icon={
              <div className="flex items-end h-[30px] text-[#a8a8a8]">
                <div className="flex flex-col text-[13px] leading-[16px] font-semibold"><span>A</span><span>Z</span></div>
                <svg width="15" height="20" viewBox="0 0 15 20" className="mb-[3px]"><path d="M0 1h15L9.5 9v9l-4-3V9z" fill="#c4c4c4" /></svg>
              </div>
            } />
            <BigBtn w="w-[44px]" dim={false} lines={["Find &", "Select"]} icon={
              <svg width="28" height="30" viewBox="0 0 28 30"><circle cx="17" cy="11" r="9.2" fill="#f8fbfe" stroke="#2b79c2" strokeWidth="2.4" /><path d="M10 18L2 27" stroke="#3d85c6" strokeWidth="4" strokeLinecap="round" /></svg>
            } />
          </div>
        </Group>
        <GroupSep />
        <div className="flex-1 flex items-end justify-end pr-[8px] pb-[3px]"><ChevronUp size={13} strokeWidth={2.6} color="#666" /></div>
      </div>

      {/* formula bar */}
      <div className="h-[48px] bg-[#e6e6e6] flex items-start pt-[11px] pl-[5px] shrink-0">
        <div className="w-[102px] h-[26px] bg-white border border-[#c6c6c6] flex items-center justify-between pl-[6px] pr-[6px] text-[14px] text-[#444]">AG10<Caret c="#777" /></div>
        <div className="w-[30px] h-[26px] flex items-center justify-center"><Dots /></div>
        <div className="w-[110px] h-[26px] bg-white border border-[#c6c6c6] flex items-center">
          <Slot w="w-[37px]"><X size={15} strokeWidth={2} color="#c0c0c0" /></Slot>
          <Slot w="w-[36px]"><Check size={16} strokeWidth={2.4} color="#c0c0c0" /></Slot>
          <Slot w="w-[36px]"><span className="[font-family:'Liberation_Serif',serif] italic text-[14px] text-[#444]">fx</span></Slot>
        </div>
        <div className="w-[1025px] ml-[3px] h-[26px] bg-white border border-[#c6c6c6] flex items-center justify-between pl-[12px] pr-[4px] text-[14px] text-[#444]">
          2
          <ChevronDown size={13} strokeWidth={2.4} color="#666" />
        </div>
      </div>

      {/* sheet */}
      <div className="relative h-[433px] overflow-hidden flex shrink-0 bg-[#e6e6e6] [font-family:Lato,sans-serif] text-[9px]">
        <table className="w-[1258px] table-fixed border-separate border-spacing-0 shrink-0 self-start">
          <colgroup>
            {COLS.map((c, i) => <col key={i} style={{ width: c[1] }} />)}
          </colgroup>
          <thead>
            <tr className="h-[13px]">
              {COLS.map((c, i) => {
                if (i === 0) {
                  return (
                    <th key={i} className="p-0 bg-[#e6e6e6] border-b border-[#a8a8a8]">
                      <svg width="18" height="12" viewBox="0 0 18 12"><path d="M16 2v9H8z" fill="#bdbdbd" /></svg>
                    </th>
                  );
                }
                const sel = i >= 33 && i <= 35;
                return (
                  <th
                    key={i}
                    className={
                      sel
                        ? "p-0 overflow-hidden whitespace-nowrap bg-[#c6c6c6] text-[#217346] font-bold text-[10px] leading-[10px] border-b-2 border-[#217346] shadow-[inset_-1px_0_0_#b0b0b0]"
                        : "p-0 overflow-hidden whitespace-nowrap bg-[#e6e6e6] text-[#333] font-bold text-[10px] leading-[10px] border-b border-r border-b-[#a8a8a8] border-r-[#b8b8b8]"
                    }
                  >
                    {c[0]}
                  </th>
                );
              })}
            </tr>
          </thead>
          <tbody>{buildRows()}</tbody>
        </table>

        {/* vertical scrollbar */}
        <div className="w-[21px] shrink-0 pl-[4px] pr-[3px] flex flex-col">
          <div className="h-[16px] mt-[1px] bg-white border border-[#ababab] flex items-center justify-center"><svg width="9" height="5" viewBox="0 0 9 5"><path d="M0 5l4.5-5L9 5z" fill="#8a8a8a" /></svg></div>
          <div className="h-[262px] bg-white border border-[#c6c6c6]" />
          <div className="flex-1" />
          <div className="h-[16px] mb-[-1px] bg-white border border-[#ababab] flex items-center justify-center"><svg width="9" height="5" viewBox="0 0 9 5"><path d="M0 0l4.5 5L9 0z" fill="#8a8a8a" /></svg></div>
        </div>

        {/* floating button */}
        <div className="absolute left-[1055px] top-[94px] w-[111px] h-[29px] rounded-md bg-[#4f81bd] border-2 border-[#385d8a] flex items-center justify-center text-white text-[10px]">EDIT JADWAL</div>
        {/* page watermark */}
        <div className="absolute left-[306px] top-[271px] text-[95px] leading-[100px] text-[#6f6f6f]/85 whitespace-nowrap pointer-events-none [font-family:'Open_Sans',sans-serif]">Page 1</div>
      </div>

      {/* sheet tabs */}
      <div className="h-[28px] bg-[#e6e6e6] border-t-2 border-[#c6c6c6] flex items-stretch text-[13px] text-[#444] shrink-0">
        <div className="w-[100px] flex items-center pl-[26px] gap-[23px] border-r border-transparent">
          <svg width="5" height="8" viewBox="0 0 5 8"><path d="M5 0L0 4l5 4z" fill="#c0c0c0" /></svg>
          <svg width="5" height="8" viewBox="0 0 5 8"><path d="M0 0l5 4-5 4z" fill="#c0c0c0" /></svg>
        </div>
        {[["Kode", "w-[56px]"], ["bbn bljr", "w-[72px]"], ["Pembagian Jam", "w-[122px]"], ["Edit Jadwal", "w-[94px]"]].map(([t, w]) => (
          <div key={t} className={`${w} my-[2px] border-l border-[#9a9a9a] flex items-center justify-center whitespace-nowrap`}>{t}</div>
        ))}
        <div className="w-[122px] h-[24px] bg-white border-b-2 border-[#217346] flex items-center justify-center font-bold text-[#217346] whitespace-nowrap">CETAK JADWAL</div>
        {[["JADWAL KELAS", "w-[120px]"], ["JADWAL GURU", "w-[118px]"], ["PEMBAGIAN JAM CETAK", "w-[174px]"]].map(([t, w], i) => (
          <div key={t} className={`${w} my-[2px] ${i ? "border-l border-[#9a9a9a]" : ""} flex items-center justify-center whitespace-nowrap`}>{t}</div>
        ))}
        <div className="w-px my-[2px] bg-[#9a9a9a]" />
        <div className="w-[33px]" />
        <div className="w-[16px] h-[16px] mt-[5px] rounded-full border border-[#7a7a7a] flex items-center justify-center"><Plus size={11} strokeWidth={2} color="#666" /></div>
        <div className="w-[126px] flex justify-center items-center"><Dots c="bg-[#888]" /></div>
        <div className="w-[15px] h-[16px] mt-[5px] bg-white border border-[#ababab] flex items-center justify-center"><svg width="5" height="8" viewBox="0 0 5 8"><path d="M5 0L0 4l5 4z" fill="#666" /></svg></div>
        <div className="w-[62px] h-[16px] mt-[5px] bg-white border border-[#ababab] -ml-px" />
        <div className="w-[6px]" />
        <div className="w-[14px] h-[16px] mt-[5px] bg-white border border-[#ababab] flex items-center justify-center"><svg width="5" height="8" viewBox="0 0 5 8"><path d="M0 0l5 4-5 4z" fill="#666" /></svg></div>
      </div>

      {/* status bar */}
      <div className="h-[22px] bg-[#f0f0f0] border-t border-[#c6c6c6] flex items-center text-[11.5px] text-[#555] shrink-0">
        <span className="ml-[7px]">Ready</span>
        <div className="flex-1" />
        <svg width="14" height="14" viewBox="0 0 14 14" className="mr-[25px]"><rect x=".5" y=".5" width="13" height="13" fill="none" stroke="#777" /><path d="M5 .5v13M9.5 .5v13M.5 5h13M.5 9.5h13" stroke="#999" /></svg>
        <svg width="14" height="14" viewBox="0 0 14 14" className="mr-[11px]"><rect x=".5" y=".5" width="13" height="13" fill="none" stroke="#777" /><rect x="3.5" y="2.5" width="7" height="9" fill="none" stroke="#777" /><path d="M5 5h4M5 7h4M5 9h4" stroke="#999" /></svg>
        <div className="w-[39px] h-[22px] bg-[#c6c6c6] flex items-center justify-center"><svg width="14" height="14" viewBox="0 0 14 14"><rect x=".5" y=".5" width="13" height="13" fill="none" stroke="#666" /><path d="M7 .5v7H.5" fill="none" stroke="#666" /></svg></div>
        <div className="w-[5px] h-[2px] bg-[#666] ml-[5px]" />
        <div className="w-[101px] h-px bg-[#a8a8a8] ml-[4px] flex items-center">
          <div className="w-[4px] h-[12px] bg-[#666] ml-[34px]" />
          <div className="w-px h-[5px] bg-[#888] ml-[12px]" />
        </div>
        <Plus size={10} strokeWidth={2.4} color="#555" className="ml-[3px]" />
        <span className="w-[35px] ml-[8px] text-center text-[11px] mr-[6px]">70%</span>
      </div>

      {/* taskbar */}
      <div className="flex-1 bg-gradient-to-r from-[#17303a] to-[#1a2b42] flex items-stretch text-white">
        <div className="w-[48px] flex items-center justify-center -translate-x-[1px]">
          <svg width="17" height="17" viewBox="0 0 17 17" fill="#fff"><path d="M0 2.4l7-1v7H0zM8 1.2l9-1.2v8.4H8zM0 9.4h7v6.8l-7-1zM8 9.4h9V17l-9-1.3z" /></svg>
        </div>
        <div className="w-[344px] bg-[#f2f2f2] flex items-center pl-[12px] text-[14.5px] text-[#3c3c3c]">
          <svg width="17" height="17" viewBox="0 0 17 17"><circle cx="10.5" cy="6.5" r="5.3" fill="none" stroke="#222" strokeWidth="1.3" /><path d="M6.5 10.5L1 16" stroke="#222" strokeWidth="1.4" /></svg>
          <span className="ml-[11px] whitespace-nowrap">Ketik di sini untuk mencari</span>
        </div>
        <div className="w-[16px]" />
        <div className="w-[17px] flex items-center">
          <svg width="17" height="17" viewBox="0 0 17 17" fill="none" stroke="#fff"><path d="M1 .5h10M1 16.5h10" /><rect x=".5" y="4.5" width="11" height="8" /><path d="M14.5 1v4M14.5 12v4" /><rect x="13" y="6.5" width="3" height="3" fill="#fff" /></svg>
        </div>
        <div className="w-[30px]" />
        <TaskIcon w="w-[25px]">
          <svg width="25" height="25" viewBox="0 0 25 25"><defs><linearGradient id="e1" x1="0" y1="0" x2="1" y2="1"><stop offset="0" stopColor="#37c9a0" /><stop offset="1" stopColor="#1a6fce" /></linearGradient></defs><circle cx="12.5" cy="12.5" r="12" fill="url(#e1)" /><path d="M2 15C3 8 9 6 13 7c4 1 6 4 5 7h-8c0 4 6 6 12 3-3 6-9 8-14 6-5-2-7-5-6-8z" fill="#0c59a4" /><path d="M10 14h8c1-3-1-6-5-7 5-1 10 2 11 6 0 2-1 3-3 3-2 0-11-2-11-2z" fill="#7fe0a8" /></svg>
        </TaskIcon>
        <div className="w-[25px]" />
        <TaskIcon w="w-[21px]" under="w-[40px]">
          <svg width="21" height="20" viewBox="0 0 21 20"><path d="M0 1h8l2 2h11v15H0z" fill="#e5b13a" /><rect x="0" y="5" width="21" height="15" fill="#f7d261" /><rect x="5" y="12" width="11" height="7" fill="#2d8bd6" /><rect x="8" y="15" width="5" height="4" fill="#f7d261" /></svg>
        </TaskIcon>
        <div className="w-[27px]" />
        <TaskIcon w="w-[22px]">
          <svg width="22" height="25" viewBox="0 0 22 25"><path d="M6 6V4a5 5 0 0110 0v2" fill="none" stroke="#d8d8d8" strokeWidth="1.4" /><rect y="5" width="22" height="20" fill="#f2f2f2" /><rect x="6" y="11" width="4.5" height="4.5" fill="#f25022" /><rect x="11.5" y="11" width="4.5" height="4.5" fill="#7fba00" /><rect x="6" y="16.5" width="4.5" height="4.5" fill="#00a4ef" /><rect x="11.5" y="16.5" width="4.5" height="4.5" fill="#ffb900" /></svg>
        </TaskIcon>
        <div className="w-[28px]" />
        <TaskIcon w="w-[23px]" under="w-[40px]">
          <svg width="23" height="25" viewBox="0 0 23 25"><defs><linearGradient id="f1" x1="0" y1="0" x2="0" y2="1"><stop offset="0" stopColor="#ffd13c" /><stop offset="1" stopColor="#f0345b" /></linearGradient></defs><circle cx="11.5" cy="14" r="11" fill="url(#f1)" /><path d="M14 0c1 3 5 4 7 9l-7-1z" fill="#ffb32c" /><circle cx="11" cy="13" r="6" fill="#6e3fd0" /><circle cx="10" cy="12" r="3" fill="#ad4fe0" /><path d="M3 11c3-3 8-4 9-2-3 0-4 2-2 4-3 1-6 0-7-2z" fill="#ff8a2b" /></svg>
        </TaskIcon>
        <div className="w-[26px]" />
        <TaskIcon w="w-[21px]" under="w-[41px]">
          <svg width="21" height="25" viewBox="0 0 21 25"><rect width="21" height="25" rx="3" fill="#2f3d4a" /><path d="M10 5l3 3-3 3-3-3z" fill="#e8e8e8" /><path d="M6 15l7-5 3 4-7 5z" fill="#47b5b0" /></svg>
        </TaskIcon>
        <div className="w-[28px]" />
        <TaskIcon w="w-[23px]">
          <svg width="23" height="26" viewBox="0 0 23 26"><ellipse cx="11.5" cy="13" rx="11" ry="12.5" fill="#e0232e" /><ellipse cx="11.5" cy="13" rx="5" ry="9.5" fill="#1a2b3e" /></svg>
        </TaskIcon>
        <div className="w-[25px]" />
        <TaskIcon w="w-[24px]" under="w-[40px]">
          <svg width="24" height="24" viewBox="0 0 24 24"><circle cx="12" cy="12" r="11" fill="#111" stroke="#f0f0f0" strokeWidth="2" /><circle cx="12" cy="12" r="6.5" fill="#ee2222" /></svg>
        </TaskIcon>
        <div className="w-[25px]" />
        <TaskIcon w="w-[24px]" under="w-[40px]">
          <svg width="24" height="25" viewBox="0 0 24 25"><ellipse cx="12" cy="12.5" rx="12" ry="12.5" fill="#7dbb20" /><path d="M4 8l10 11 5-3L8 5zM13 2l-1 7 5 6 2-9z" fill="#e8f3d5" /><path d="M6 8l9 10" stroke="#5a9a16" strokeWidth="1.3" /></svg>
        </TaskIcon>
        <div className="w-[13px]" />
        <div className="w-[48px] bg-[#3e5565] border-b-2 border-[#7cc4f0] flex items-center justify-center">
          <svg width="23" height="25" viewBox="0 0 23 25"><rect x="9" y="3" width="14" height="19" fill="#f0f8f2" stroke="#1f7a4a" /><path d="M16 3v19M9 9.5h14M9 15.5h14" stroke="#1f7a4a" /><path d="M0 3l12-3v25L0 22z" fill="#107c41" /><path d="M3 7.5l5 9M8 7.5l-5 9" stroke="#fff" strokeWidth="1.8" /></svg>
        </div>
        <div className="w-[5px] bg-[#2a3d50]" />
        <div className="flex-1 flex items-center pl-[142px]">
          <ChevronUp size={17} strokeWidth={1.7} color="#f0f0f0" />
          <svg width="15" height="20" viewBox="0 0 15 20" className="ml-[7px]"><path d="M14 0C7 2 2 9 1 19c5-1 10-7 13-19z" fill="#a77fd0" /></svg>
          <Wifi size={15} strokeWidth={1.8} color="#e8e8e8" className="ml-[12px]" />
          <Volume2 size={16} strokeWidth={1.6} color="#f0f0f0" className="ml-[5px]" />
          <span className="ml-[12px] text-[12px] text-[#f0f0f0]">IND</span>
          <div className="w-[52px] ml-[16px] flex flex-col items-center text-[12px] leading-[18px] text-[#f0f0f0] whitespace-nowrap">
            <span>23:27</span>
            <span>22/12/2020</span>
          </div>
          <div className="relative ml-[20px]">
            <svg width="17" height="16" viewBox="0 0 17 16"><path d="M0 0h17v12H7l-3 3v-3H0z" fill="#f5f5f5" /><path d="M3 3.5h11M3 6.5h11M3 9h8" stroke="#777" /></svg>
            <div className="absolute left-[7px] top-[7px] w-[14px] h-[14px] rounded-full bg-[#2c3e4c] border border-[#ddd] flex items-center justify-center text-[10px] font-bold leading-none">4</div>
          </div>
        </div>
      </div>

      {/* Windows activation notice */}
      <div className="absolute left-[990px] top-[604px] text-[20px] leading-[26px] text-[#bdbdbd]/60 whitespace-nowrap pointer-events-none">Activate Windows</div>
      <div className="absolute left-[991px] top-[627px] text-[14.5px] leading-[20px] text-[#a8a8a8]/80 whitespace-nowrap pointer-events-none">Go to Settings to activate Windows.</div>
    </div>
  );
}
